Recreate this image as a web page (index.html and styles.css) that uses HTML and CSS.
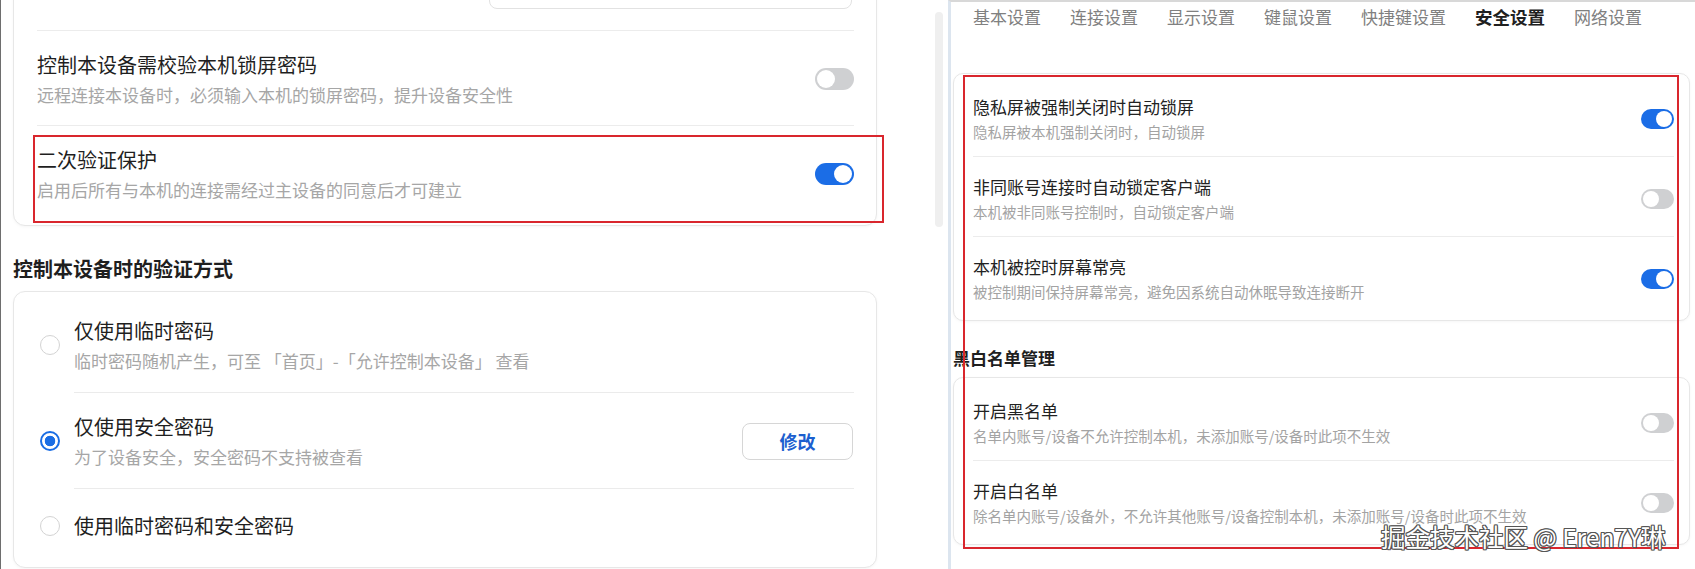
FILE: index.html
```html
<!DOCTYPE html>
<html lang="zh-CN">
<head>
<meta charset="utf-8">
<title>安全设置</title>
<link rel="stylesheet" href="styles.css">
</head>
<body>
<div class="screen">
  <section class="pane-left">
    <div class="scroll">
      <div class="card card-top">
        <div class="row row-input"><div class="input"></div></div>
        <div class="row">
          <div class="text">
            <div class="title">控制本设备需校验本机锁屏密码</div>
            <div class="desc">远程连接本设备时，必须输入本机的锁屏密码，提升设备安全性</div>
          </div>
          <span class="switch"></span>
        </div>
        <div class="row">
          <div class="text">
            <div class="title">二次验证保护</div>
            <div class="desc">启用后所有与本机的连接需经过主设备的同意后才可建立</div>
          </div>
          <span class="switch on"></span>
        </div>
      </div>

      <h2 class="section-title">控制本设备时的验证方式</h2>

      <div class="card card-radio">
        <div class="opt">
          <span class="radio"></span>
          <div class="opt-body">
            <div class="text">
              <div class="title">仅使用临时密码</div>
              <div class="desc">临时密码随机产生，可至 「首页」-「允许控制本设备」 查看</div>
            </div>
          </div>
        </div>
        <div class="opt">
          <span class="radio checked"></span>
          <div class="opt-body">
            <div class="text">
              <div class="title">仅使用安全密码</div>
              <div class="desc">为了设备安全，安全密码不支持被查看</div>
            </div>
            <button class="btn">修改</button>
          </div>
        </div>
        <div class="opt">
          <span class="radio"></span>
          <div class="opt-body single">
            <div class="text">
              <div class="title">使用临时密码和安全密码</div>
            </div>
          </div>
        </div>
      </div>
    </div>
    <div class="scrollbar"></div>
    <div class="mark mark-left"></div>
  </section>

  <section class="pane-right">
    <nav class="tabs">
      <span class="tab">基本设置</span>
      <span class="tab">连接设置</span>
      <span class="tab">显示设置</span>
      <span class="tab">键鼠设置</span>
      <span class="tab">快捷键设置</span>
      <span class="tab active">安全设置</span>
      <span class="tab">网络设置</span>
    </nav>

    <div class="card card-r">
      <div class="row-r">
        <div class="text">
          <div class="title-r">隐私屏被强制关闭时自动锁屏</div>
          <div class="desc-r">隐私屏被本机强制关闭时，自动锁屏</div>
        </div>
        <span class="switch sm on"></span>
      </div>
      <div class="row-r">
        <div class="text">
          <div class="title-r">非同账号连接时自动锁定客户端</div>
          <div class="desc-r">本机被非同账号控制时，自动锁定客户端</div>
        </div>
        <span class="switch sm"></span>
      </div>
      <div class="row-r">
        <div class="text">
          <div class="title-r">本机被控时屏幕常亮</div>
          <div class="desc-r">被控制期间保持屏幕常亮，避免因系统自动休眠导致连接断开</div>
        </div>
        <span class="switch sm on"></span>
      </div>
    </div>

    <h3 class="section-title-r">黑白名单管理</h3>

    <div class="card card-r">
      <div class="row-r">
        <div class="text">
          <div class="title-r">开启黑名单</div>
          <div class="desc-r">名单内账号/设备不允许控制本机，未添加账号/设备时此项不生效</div>
        </div>
        <span class="switch sm"></span>
      </div>
      <div class="row-r">
        <div class="text">
          <div class="title-r">开启白名单</div>
          <div class="desc-r">除名单内账号/设备外，不允许其他账号/设备控制本机，未添加账号/设备时此项不生效</div>
        </div>
        <span class="switch sm"></span>
      </div>
    </div>

    <div class="mark mark-right"></div>
    <div class="watermark">掘金技术社区 @ Eren7Y琳</div>
  </section>
</div>
</body>
</html>
```

FILE: styles.css
```css
* { box-sizing: border-box; }

html, body {
  margin: 0;
  padding: 0;
  background: #ffffff;
}

body {
  font-family: "Noto Sans CJK SC", "Noto Sans", "Liberation Sans", sans-serif;
  color: #222;
}

.screen {
  display: flex;
  width: 1695px;
  height: 569px;
  overflow: hidden;
}

/* ---------- left pane ---------- */
.pane-left {
  position: relative;
  width: 948px;
  height: 569px;
  flex-shrink: 0;
  display: flex;
  align-items: flex-start;
  border-left: 1px solid #6e6e6e;
  padding-left: 12px;
  overflow: hidden;
  background: #fff;
}

.scroll {
  width: 864px;
  flex-shrink: 0;
}

.scrollbar {
  width: 8px;
  height: 215px;
  margin-top: 12px;
  margin-left: 58px;
  border-radius: 4px;
  background: #efefef;
}

.card {
  background: #fff;
  border: 1px solid #e7e7e7;
  border-radius: 12px;
  box-shadow: 0 1px 3px rgba(0, 0, 0, 0.04);
}

.card-top {
  margin-top: -50px;
  padding: 0 22px 5px 23px;
}

.row {
  display: flex;
  align-items: center;
  justify-content: space-between;
  padding: 20px 0 18px;
  border-bottom: 1px solid #ececec;
}

.row:last-child { border-bottom: none; }

.row-input {
  height: 80px;
  padding: 0 2px 21px 0;
  justify-content: flex-end;
  align-items: flex-end;
}

.input {
  width: 363px;
  height: 40px;
  border: 1px solid #e2e2e2;
  border-radius: 8px;
}

.title {
  font-size: 20px;
  line-height: 28px;
  color: #1f1f1f;
}

.desc {
  margin-top: 4px;
  font-size: 17px;
  line-height: 24px;
  color: #a6a6a6;
}

.section-title {
  margin: 29px 0 8px;
  font-size: 20px;
  line-height: 28px;
  font-weight: 700;
  color: #1f1f1f;
}

.card-radio {
  padding: 5px 22px 5px 26px;
}

.opt {
  display: flex;
  align-items: center;
  gap: 14px;
}

.opt:last-child .opt-body { border-bottom: none; }

.opt-body {
  flex: 1;
  display: flex;
  align-items: center;
  justify-content: space-between;
  padding: 20px 0 19px;
  border-bottom: 1px solid #ebebeb;
}

.opt-body.single {
  padding: 23px 0 22px;
}

.radio {
  width: 20px;
  height: 20px;
  flex-shrink: 0;
  border-radius: 50%;
  border: 1.5px solid #d3d3d3;
  background: #fff;
}

.radio.checked {
  border: 2px solid #1a6de4;
  background: radial-gradient(circle, #1a6de4 0 5px, #ffffff 5.6px);
}

.btn {
  width: 111px;
  height: 37px;
  border: 1px solid #d6d6d6;
  border-radius: 8px;
  background: #fff;
  font-family: inherit;
  font-size: 18px;
  font-weight: 700;
  color: #1c5fcf;
  padding: 0;
  margin-right: 1px;
}

/* ---------- switches ---------- */
.switch {
  position: relative;
  flex-shrink: 0;
  width: 39px;
  height: 22px;
  border-radius: 11px;
  background: #cfd0d2;
}

.switch::after {
  content: "";
  position: absolute;
  top: 2px;
  left: 2px;
  width: 18px;
  height: 18px;
  border-radius: 50%;
  background: #fff;
}

.switch.on { background: #1b6de6; }
.switch.on::after { left: 19px; }

.switch.sm {
  width: 33px;
  height: 20px;
  border-radius: 10px;
}

.switch.sm::after {
  width: 16px;
  height: 16px;
}

.switch.sm.on::after { left: 15px; }

/* ---------- right pane ---------- */
.pane-right {
  position: relative;
  flex: 1;
  height: 569px;
  border-left: 3px solid #dce5ef;
  border-top: 2px solid #d8d8d8;
  padding: 0 5px 0 2px;
  overflow: hidden;
  background: #fff;
}

.tabs {
  display: flex;
  align-items: baseline;
  gap: 29px;
  margin: 3px 0 44px;
  padding-left: 20px;
  font-size: 17px;
  line-height: 24px;
  color: #808080;
}

.tab { white-space: nowrap; }

.tab.active {
  color: #202020;
  font-weight: 700;
  font-size: 17.5px;
}

.card-r {
  border-radius: 10px;
  padding: 3px 15px 4px 19px;
}

.row-r {
  display: flex;
  align-items: center;
  justify-content: space-between;
  padding: 18px 0 14px;
  border-bottom: 1px solid #ececec;
}

.row-r:last-child { border-bottom: none; }

.title-r {
  font-size: 17px;
  line-height: 24px;
  color: #222;
}

.desc-r {
  margin-top: 3px;
  font-size: 14.5px;
  line-height: 20px;
  color: #a3a3a3;
}

.section-title-r {
  margin: 25px 0 7px;
  font-size: 17px;
  line-height: 24px;
  font-weight: 700;
  color: #1f1f1f;
}

/* ---------- annotation overlays ---------- */
.mark {
  position: absolute;
  border: 2px solid #d9262d;
  pointer-events: none;
}

.mark-left {
  left: 32px;
  top: 135px;
  width: 851px;
  height: 88px;
}

.mark-right {
  left: 12px;
  top: 73px;
  width: 716px;
  height: 474px;
}

.watermark {
  position: absolute;
  left: 430px;
  top: 520px;
  font-size: 24.5px;
  line-height: 30px;
  color: #ffffff;
  white-space: nowrap;
  text-shadow:
    1px 0 0 #555, -1px 0 0 #555, 0 1px 0 #555, 0 -1px 0 #555,
    1px 1px 0 #555, -1px -1px 0 #555, 1px -1px 0 #555, -1px 1px 0 #555;
}
```
